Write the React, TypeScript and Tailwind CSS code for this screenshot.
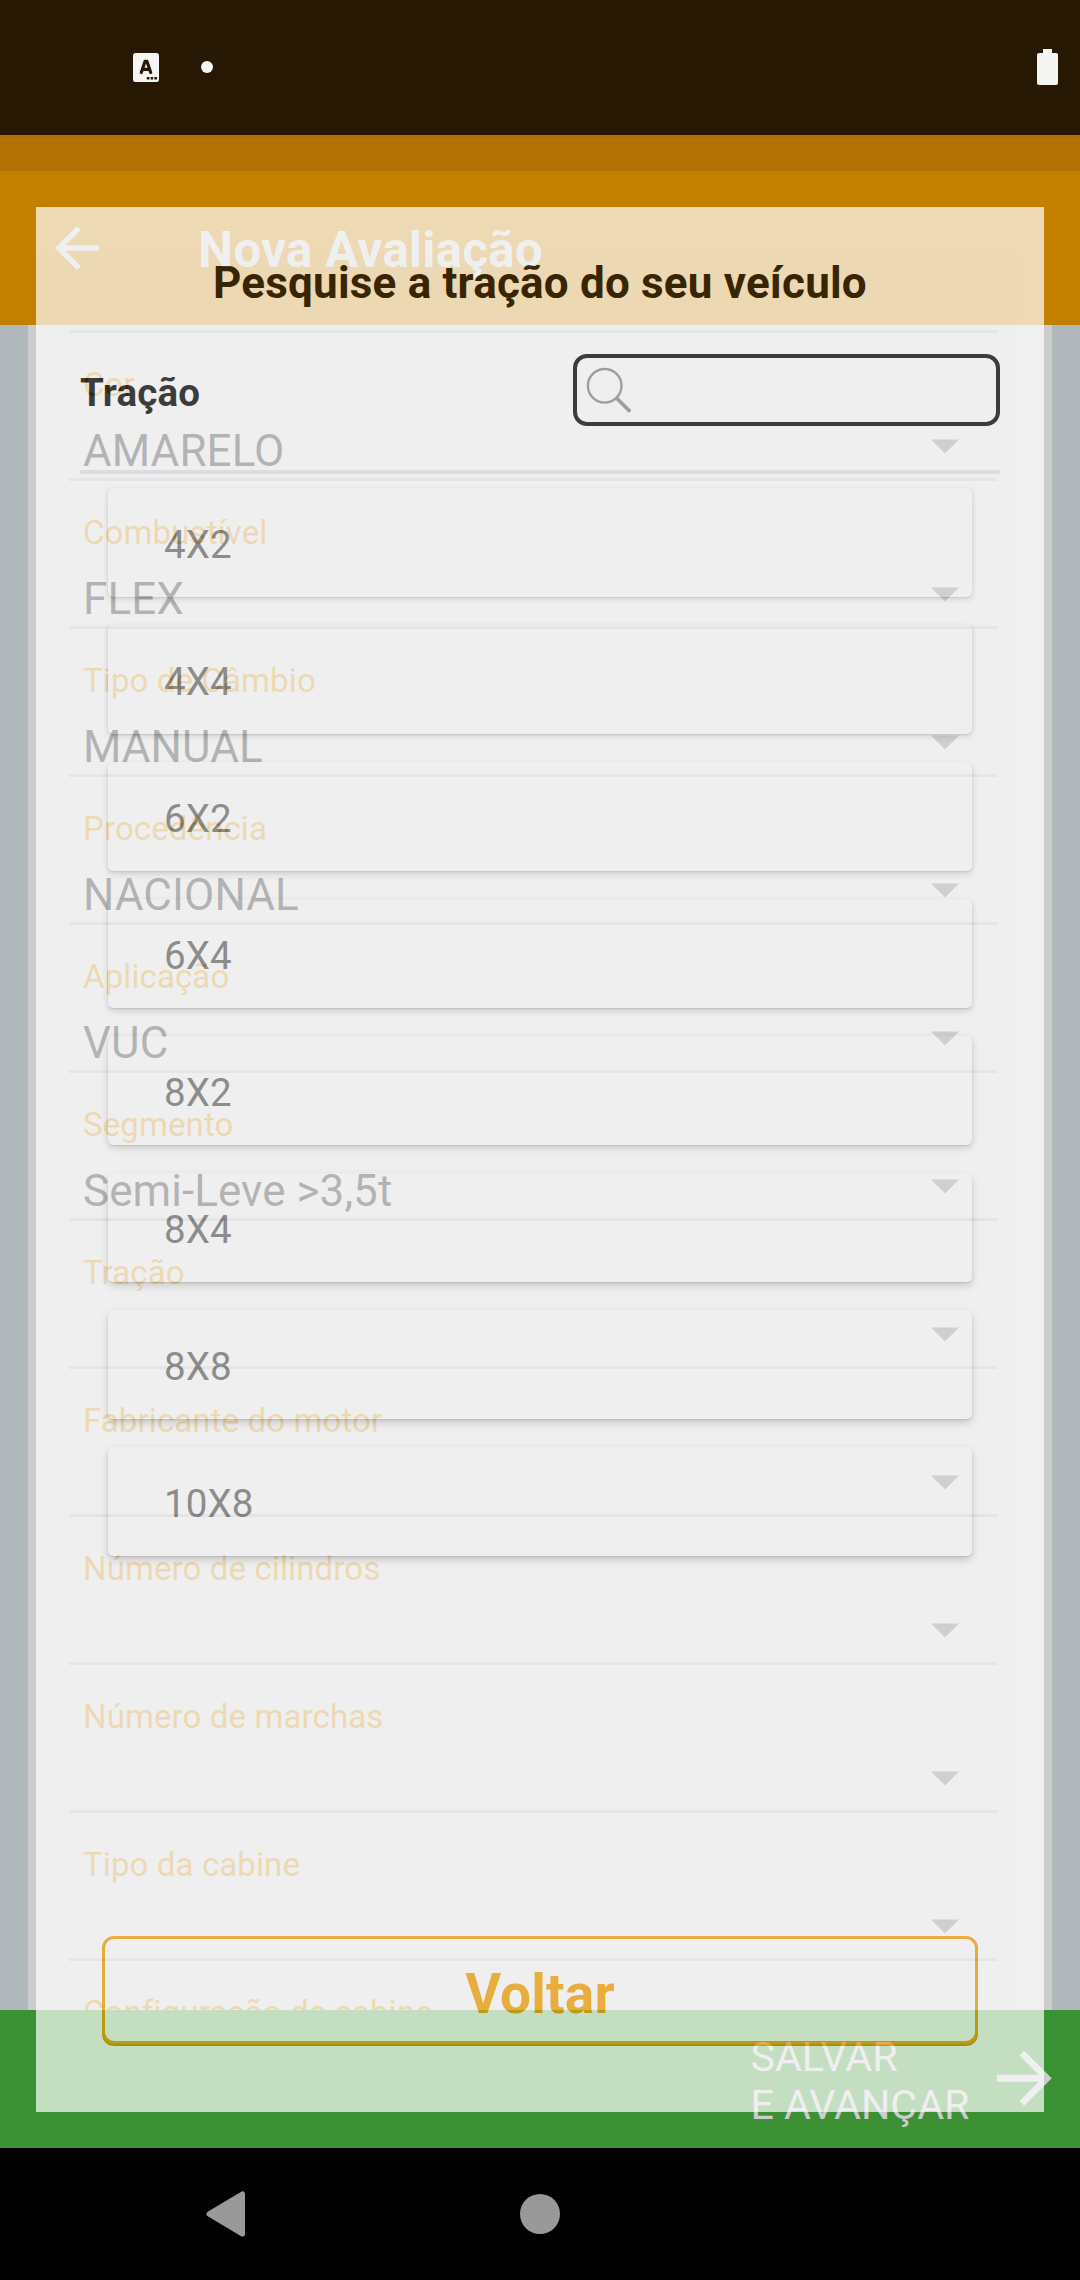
const fields = [
  { label: "Cor", value: "AMARELO" },
  { label: "Combustível", value: "FLEX" },
  { label: "Tipo de Câmbio", value: "MANUAL" },
  { label: "Procedência", value: "NACIONAL" },
  { label: "Aplicação", value: "VUC" },
  { label: "Segmento", value: "Semi-Leve >3,5t" },
  { label: "Tração", value: "" },
  { label: "Fabricante do motor", value: "" },
  { label: "Número de cilindros", value: "" },
  { label: "Número de marchas", value: "" },
  { label: "Tipo da cabine", value: "" },
  { label: "Configuração de cabine", value: "" },
];

// Lower cards cast a slightly deeper shadow than upper ones.
const options = [
  { name: "4X2", shadow: "shadow-[0_2px_7px_rgba(0,0,0,0.17),0_1px_2px_rgba(0,0,0,0.12)]" },
  { name: "4X4", shadow: "shadow-[0_2px_7px_rgba(0,0,0,0.18),0_1px_2px_rgba(0,0,0,0.13)]" },
  { name: "6X2", shadow: "shadow-[0_3px_7px_rgba(0,0,0,0.19),0_1px_2px_rgba(0,0,0,0.13)]" },
  { name: "6X4", shadow: "shadow-[0_3px_7px_rgba(0,0,0,0.20),0_1px_2px_rgba(0,0,0,0.14)]" },
  { name: "8X2", shadow: "shadow-[0_3px_8px_rgba(0,0,0,0.21),0_1px_2px_rgba(0,0,0,0.14)]" },
  { name: "8X4", shadow: "shadow-[0_4px_8px_rgba(0,0,0,0.21),0_1px_2px_rgba(0,0,0,0.15)]" },
  { name: "8X8", shadow: "shadow-[0_4px_9px_rgba(0,0,0,0.22),0_1px_2px_rgba(0,0,0,0.15)]" },
  { name: "10X8", shadow: "shadow-[0_4px_9px_rgba(0,0,0,0.23),0_1px_2px_rgba(0,0,0,0.15)]" },
];

function StatusBar() {
  return (
    <div className="flex h-[135px] shrink-0 items-start bg-[#271804]">
      <svg className="mt-[53px] ml-[133px] h-[29px] w-[26px]" viewBox="0 0 26 29">
        <rect width="26" height="29" rx="2.5" fill="#f5f5f4" />
        <path
          d="M8.3 19.5 12 8.4h2L17.7 19.5M9.8 16.4h6.4"
          fill="none"
          stroke="#271804"
          strokeWidth="3.2"
          strokeLinecap="round"
          strokeLinejoin="round"
        />
        <path d="M13.8 24h2.6v2.6h-2.6zM17.6 24h2.6v2.6h-2.6zM21.4 24h2.6v2.6h-2.6z" fill="#271804" />
      </svg>
      <div className="mt-[61px] ml-[42px] size-3 rounded-full bg-[#f5f5f4]" />
      <svg className="mt-[49px] mr-[22px] ml-auto h-9 w-[21px]" viewBox="0 0 21 36">
        <path d="M6 0h9v4h4q2 0 2 2v28q0 2-2 2H2q-2 0-2-2V6q0-2 2-2h4z" fill="#f5f5f4" />
      </svg>
    </div>
  );
}

function Field({ label, value }: { label: string; value: string }) {
  return (
    <div className="h-[148px] shrink-0 border-b-[3px] border-[#a8a8a8] pt-8">
      <div className="pl-[14px] text-[33px] leading-[39px] tracking-[0.11px] text-[#c28000]">{label}</div>
      <div className="mt-[21px] flex h-[52px] items-start pr-[38px] pl-[14px]">
        <span className="text-[44px] leading-[52px] tracking-[0.06px] text-black">{value}</span>
        <svg className="mt-[14px] ml-auto h-[15px] w-[28px]" viewBox="0 0 28 15">
          <path d="M0 .5h28L14 14.5z" fill="#606060" />
        </svg>
      </div>
    </div>
  );
}

function Screen() {
  return (
    <div className="flex h-[2280px] flex-col bg-black">
      <StatusBar />
      <div className="h-9 shrink-0 bg-[#b17203]" />
      <header className="flex h-[154px] shrink-0 items-start bg-[#c28000] pl-11">
        <svg className="mt-11 size-[66px]" viewBox="0 0 24 24" fill="#cccccc">
          <path d="M20 11H7.83l5.59-5.59L12 4l-8 8 8 8 1.41-1.41L7.83 13H20z" />
        </svg>
        <h1 className="mt-[50px] ml-[88px] text-[49.5px] leading-[58px] font-bold tracking-[0.2px] text-[#cccccc]">
          Nova Avaliação
        </h1>
      </header>
      <main className="flex min-h-0 flex-1 flex-col overflow-hidden bg-[#b0b8bb] px-7">
        <div className="flex shrink-0 flex-col bg-[#cccccc] pt-[5px] pr-[55px] pl-[41px]">
          <div className="h-[3px] shrink-0 bg-[#a8a8a8]" />
          {fields.map((f) => (
            <Field key={f.label} {...f} />
          ))}
        </div>
      </main>
      <footer className="flex h-[138px] shrink-0 items-start justify-end bg-[#3b9133] pr-[15px]">
        <div className="mt-[23px] text-[41.25px] leading-[48px] text-[#cccccc]">
          SALVAR
          <br />E AVANÇAR
        </div>
        <svg className="mt-[27px] ml-[13px] size-[82.5px]" viewBox="0 0 24 24" fill="#cccccc">
          <path d="M12 4l-1.41 1.41L16.17 11H4v2h12.17l-5.58 5.59L12 20l8-8z" />
        </svg>
      </footer>
      <nav className="flex h-[132px] shrink-0 items-center pl-[206px]">
        <svg className="h-[46px] w-10" viewBox="0 0 40 46">
          <path d="M3 23 36.5 3v40z" fill="#999" stroke="#999" strokeWidth="5" strokeLinejoin="round" />
        </svg>
        <div className="ml-[274px] size-10 rounded-full bg-[#999999]" />
      </nav>
    </div>
  );
}

function TractionDialog() {
  return (
    <div className="absolute top-[207px] left-9 flex h-[1905px] w-[1008px] flex-col bg-white opacity-[0.702]">
      <h2 className="mt-[50px] text-center text-[44px] leading-[52px] font-bold tracking-[0.19px] text-black">
        Pesquise a tração do seu veículo
      </h2>
      <div className="mx-11 mt-[45px] flex h-[120px] items-start justify-between border-b-4 border-[#e0e7ed]">
        <span className="mt-[16px] text-[38.5px] leading-[46px] font-bold tracking-[0.2px] text-black">Tração</span>
        <div className="h-[72px] w-[427px] rounded-[14px] border-4 border-black">
          <svg className="mt-[9px] ml-[9px] size-[48px]" viewBox="0 0 48 48" fill="none" stroke="#858d96" strokeLinecap="round">
            <circle cx="18.7" cy="18.8" r="16.8" strokeWidth="2.4" />
            <path d="M31 31.5 43.2 43.6" strokeWidth="3.6" />
          </svg>
        </div>
      </div>
      <ul className="mx-[72px] mt-[14px] flex flex-col gap-7">
        {options.map((o) => (
          <li
            key={o.name}
            className={`h-[109px] rounded-[5px] bg-white pt-[34px] pl-14 text-[38.5px] leading-[46px] tracking-[0.15px] text-[#727272] ${o.shadow}`}
          >
            {o.name}
          </li>
        ))}
      </ul>
      <button className="mx-[66px] mt-auto mb-[68px] h-[108px] rounded-[12px] border-[3px] border-[#f4a000] bg-white pt-[7px] text-center text-[55px] leading-[64px] font-bold tracking-[0.2px] text-[#f4a000] shadow-[0_2px_0_#de8c00]">
        Voltar
      </button>
    </div>
  );
}

export default function App() {
  return (
    <div className="relative h-[2280px] w-[1080px] overflow-hidden font-['Roboto',sans-serif]">
      <Screen />
      <TractionDialog />
    </div>
  );
}
